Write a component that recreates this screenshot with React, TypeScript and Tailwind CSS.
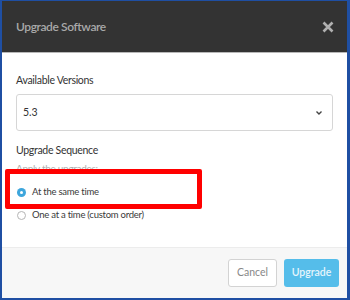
import React from "react";

const Radio: React.FC<{ checked?: boolean; label: string }> = ({ checked, label }) => {
  return (
    <div className="flex items-center h-4 gap-[6px]">
      {checked ? (
        <span className="w-[9px] h-[9px] rounded-full bg-[#3ea6dc] flex items-center justify-center">
          <span className="w-[3px] h-[3px] rounded-full bg-white" />
        </span>
      ) : (
        <span className="w-[9px] h-[9px] rounded-full border border-[#b5b5b5] bg-white" />
      )}
      <span className="text-[9.5px] tracking-[-0.25px] text-[#3a3a3a]">{label}</span>
    </div>
  );
};

const App: React.FC = () => {
  return (
    <div
      className="w-[350px] h-[300px] bg-white border-[#1f4fa3] border-t border-l-2 border-r-[3px] border-b-2 flex flex-col relative"
      style={{ fontFamily: "Lato, 'Open Sans', sans-serif" }}
    >
      <header className="h-[52px] bg-[#333333] border-b border-[#b8b8b8] flex items-center justify-between pl-[14px] pr-[12px]">
        <h1 className="text-[12px] tracking-[-0.4px] font-semibold text-[#a9a9a9] mt-[1px]">Upgrade Software</h1>
        <svg width="12" height="12" viewBox="0 0 12 12" className="mr-[1px]">
          <path d="M1.5 1.5 L10.5 10.5 M10.5 1.5 L1.5 10.5" stroke="#b0b0b0" strokeWidth="2.6" strokeLinecap="butt" />
        </svg>
      </header>

      <div className="flex-1 px-[14px] flex flex-col">
        <div className="mt-[19px] h-4 leading-4 text-[10.5px] tracking-[-0.3px] text-[#333]">Available Versions</div>
        <div className="mt-[6px] h-[37px] border border-[#d6d6d6] rounded-[3px] flex items-center justify-between px-[6px]">
          <span className="text-[10.5px] text-[#333]">5.3</span>
          <svg width="8" height="6" viewBox="0 0 8 6" className="mr-[3px]">
            <path d="M1.5 1.5 L4 4 L6.5 1.5" stroke="#444" strokeWidth="1.4" fill="none" />
          </svg>
        </div>

        <div className="mt-[11px] h-4 leading-4 text-[10.5px] tracking-[-0.3px] text-[#333]">Upgrade Sequence</div>
        <div className="mt-[2px] h-4 leading-4 text-[10px] tracking-[-0.3px] text-[#b0b0b0]">Apply the upgrades:</div>
        <div className="mt-[8px] pl-[1px] flex flex-col gap-[7px]">
          <Radio checked label="At the same time" />
          <Radio label="One at a time (custom order)" />
        </div>
      </div>

      <footer className="h-[51px] bg-[#f7f7f7] border-t border-[#ececec] flex items-center justify-end gap-[7px] pr-[8px]">
        <button className="h-[28px] w-[49px] rounded-[3px] border border-[#d3d3d3] bg-white text-[10.5px] text-[#888]">
          Cancel
        </button>
        <button className="h-[28px] w-[55px] rounded-[3px] bg-[#55bdea] text-[10.5px] text-[#e6f5fc] font-semibold">
          Upgrade
        </button>
      </footer>

      <div className="absolute left-[3px] top-[168px] w-[197px] h-[40px] border-[5px] border-[#ff0000] rounded-[2px] pointer-events-none" />
    </div>
  );
};

export default App;
